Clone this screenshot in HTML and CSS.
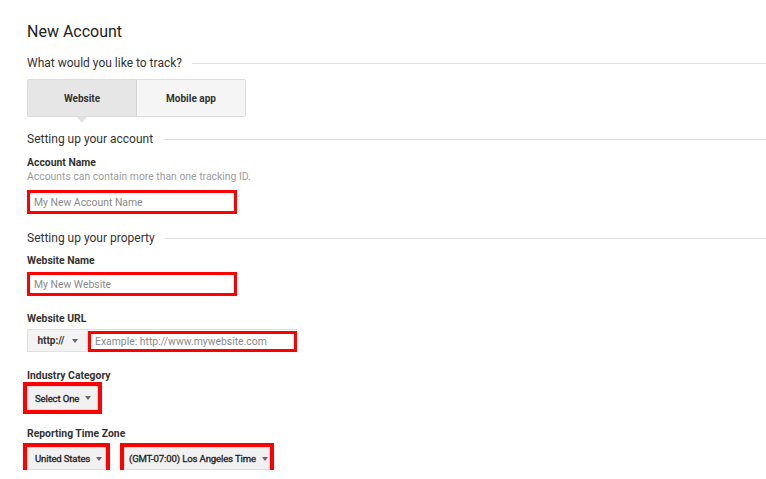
FILE: index.html
```html
<!DOCTYPE html>
<html>
<head>
<meta charset="utf-8">
<link rel="stylesheet" href="styles.css">
</head>
<body>
<div class="page">
  <h1 class="title">New Account</h1>

  <div class="section section-track">
    <span class="section-text">What would you like to track?</span>
    <span class="section-line"></span>
  </div>

  <div class="tabs">
    <div class="tab tab-active">Website</div>
    <div class="tab">Mobile app</div>
  </div>

  <div class="section section-account">
    <span class="section-text">Setting up your account</span>
    <span class="section-line"></span>
  </div>

  <div class="label label-account">Account Name</div>
  <div class="help">Accounts can contain more than one tracking ID.</div>
  <input class="text-input input-account" type="text" placeholder="My New Account Name">

  <div class="section section-property">
    <span class="section-text">Setting up your property</span>
    <span class="section-line"></span>
  </div>

  <div class="label label-website">Website Name</div>
  <input class="text-input input-website" type="text" placeholder="My New Website">

  <div class="label label-url">Website URL</div>
  <div class="url-row">
    <div class="proto-btn">http://<span class="caret"></span></div>
    <div class="url-field">
      <input class="url-input" type="text" placeholder="Example: http://www.mywebsite.com">
    </div>
  </div>

  <div class="label label-industry">Industry Category</div>
  <div class="select-row row-industry">
    <div class="select-btn btn-industry"><span class="btn-text">Select One</span><span class="caret"></span></div>
  </div>

  <div class="label label-tz">Reporting Time Zone</div>
  <div class="select-row row-tz">
    <div class="select-btn btn-country"><span class="btn-text">United States</span><span class="caret"></span></div>
    <div class="select-btn btn-zone"><span class="btn-text">(GMT-07:00) Los Angeles Time</span><span class="caret"></span></div>
  </div>
</div>
</body>
</html>
```

FILE: styles.css
```css
html, body {
  margin: 0;
  padding: 0;
  background: #ffffff;
}

body {
  font-family: Roboto, "Liberation Sans", Arial, sans-serif;
  color: #333333;
}

.page {
  padding: 22px 0 0 27px;
}

.title {
  margin: 0;
  font-size: 16px;
  line-height: 20px;
  font-weight: 400;
  color: #222222;
}

.section {
  display: flex;
  align-items: center;
  font-size: 12px;
  line-height: 16px;
  color: #333333;
}

.section-line {
  flex: 1;
  height: 1px;
  background: #e0e0e0;
  margin-left: 10px;
  margin-top: 1px;
}

.section-track { margin-top: 13px; }
.section-account { margin-top: 14px; }
.section-property { margin-top: 16px; }

.tabs {
  margin-top: 8px;
  display: flex;
  width: 219px;
  height: 38px;
  box-sizing: border-box;
  border: 1px solid #dcdcdc;
  border-radius: 2px;
}

.tab {
  position: relative;
  flex: 1;
  display: flex;
  align-items: center;
  justify-content: center;
  font-size: 10px;
  font-weight: 700;
  color: #333333;
  background: #f5f5f5;
}

.tab-active {
  background: #e6e6e6;
  border-right: 1px solid #d4d4d4;
}

.tab-active::after {
  content: "";
  position: absolute;
  left: 50%;
  bottom: -7px;
  margin-left: -5px;
  border-left: 5px solid transparent;
  border-right: 5px solid transparent;
  border-top: 6px solid #e2e2e2;
}

.label {
  font-size: 10.4px;
  line-height: 14px;
  font-weight: 700;
  color: #333333;
}

.label-account { margin-top: 9px; }
.label-website { margin-top: 8px; }
.label-url { margin-top: 16px; }
.label-industry { margin-top: 17px; }
.label-tz { margin-top: 17px; }

.help {
  font-size: 10.4px;
  line-height: 13px;
  color: #9e9e9e;
}

.text-input {
  display: block;
  box-sizing: border-box;
  width: 210px;
  height: 24px;
  border: 3px solid #ff0000;
  padding: 0 0 0 4px;
  font-family: Roboto, "Liberation Sans", Arial, sans-serif;
  font-size: 10.4px;
  color: #333333;
  outline: none;
  background: #ffffff;
}

.text-input::placeholder,
.url-input::placeholder {
  color: #8a8a8a;
}

.input-account { margin-top: 7px; }
.input-website { margin-top: 4px; }

.url-row {
  margin-top: 3px;
  display: flex;
  height: 23px;
}

.proto-btn {
  box-sizing: border-box;
  width: 61px;
  height: 23px;
  display: flex;
  align-items: center;
  justify-content: center;
  gap: 7px;
  background: #f3f3f3;
  border: 1px solid #e0e0e0;
  font-size: 10px;
  font-weight: 700;
  color: #333333;
}

.proto-btn .caret {
  margin-left: 0;
}

.url-field {
  box-sizing: border-box;
  width: 209px;
  height: 23px;
  border-top: 1px solid #dddddd;
  padding-top: 1px;
}

.url-input {
  display: block;
  box-sizing: border-box;
  width: 100%;
  height: 21px;
  border: 3px solid #ff0000;
  padding: 0 0 0 4px;
  font-family: Roboto, "Liberation Sans", Arial, sans-serif;
  font-size: 10.4px;
  color: #333333;
  outline: none;
  background: #ffffff;
}

.select-row {
  display: flex;
  gap: 18px;
}

.row-industry { margin-top: 3px; }
.row-tz { margin-top: 6px; }

.select-btn {
  box-sizing: border-box;
  height: 23px;
  display: flex;
  align-items: center;
  justify-content: space-between;
  padding: 0 8px 0 7px;
  background: #f1f1f1;
  border: 1px solid #dcdcdc;
  outline: 4px solid #ff0000;
  font-size: 9.6px;
  font-weight: 400;
  color: #222222;
  white-space: nowrap;
}

.btn-text {
  letter-spacing: -0.15px;
  -webkit-text-stroke: 0.3px #222222;
}

.btn-industry { width: 71px; height: 24px; }
.btn-country { width: 79px; }
.btn-zone { width: 146px; padding-left: 4px; padding-right: 6px; }

.caret {
  display: inline-block;
  flex: none;
  width: 0;
  height: 0;
  margin-left: 6px;
  border-left: 3.5px solid transparent;
  border-right: 3.5px solid transparent;
  border-top: 4px solid #666666;
}
```
